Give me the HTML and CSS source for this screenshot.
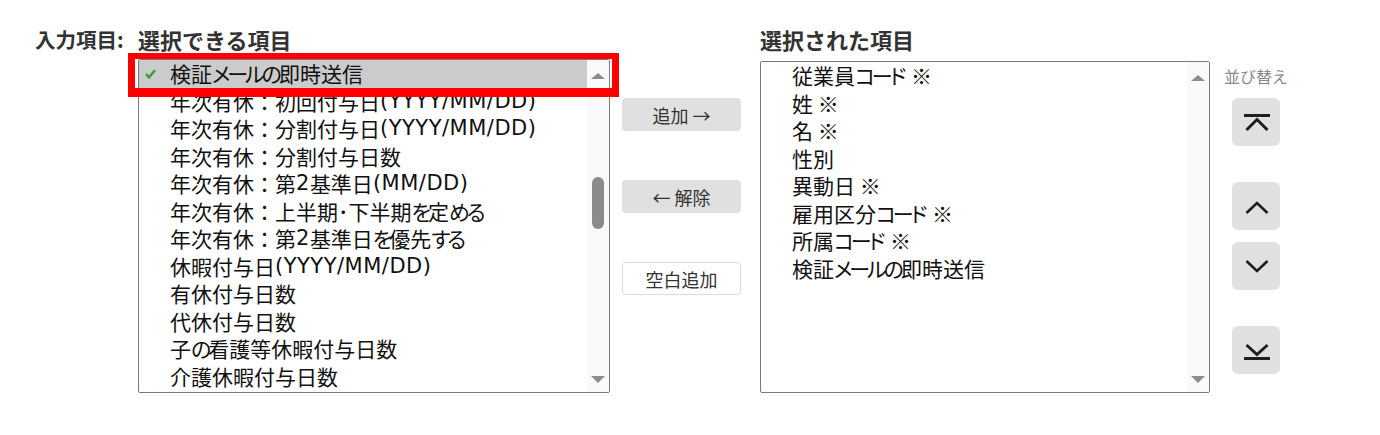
FILE: index.html
```html
<!DOCTYPE html>
<html lang="ja">
<head>
<meta charset="utf-8">
<title>入力項目</title>
<link rel="stylesheet" href="styles.css">
</head>
<body>
<div class="page">
  <div class="field-label">入力項目:</div>

  <div class="col col-left">
    <div class="heading">選択できる項目</div>
    <div class="listbox listbox-left">
      <ul class="items">
        <li class="item selected"><svg class="check" viewBox="0 0 11 10" width="11" height="10"><path d="M1 5.2 L4 8.3 L10 1.2" fill="none" stroke="#3a9b46" stroke-width="2.5"/></svg>検証<span class="kana">メールの</span>即時送信</li>
        <li class="item">年次有休<span class="fw">：</span>初回付与日<span class="lat">(YYYY/MM/DD)</span></li>
        <li class="item">年次有休<span class="fw">：</span>分割付与日<span class="lat">(YYYY/MM/DD)</span></li>
        <li class="item">年次有休<span class="fw">：</span>分割付与日数</li>
        <li class="item">年次有休<span class="fw">：</span>第<span class="lat">2</span>基準日<span class="lat">(MM/DD)</span></li>
        <li class="item">年次有休<span class="fw">：</span>上半期･下半期<span class="kana">を</span>定<span class="kana">める</span></li>
        <li class="item">年次有休<span class="fw">：</span>第<span class="lat">2</span>基準日<span class="kana">を</span>優先<span class="kana">する</span></li>
        <li class="item">休暇付与日<span class="lat">(YYYY/MM/DD)</span></li>
        <li class="item">有休付与日数</li>
        <li class="item">代休付与日数</li>
        <li class="item">子<span class="kana">の</span>看護等休暇付与日数</li>
        <li class="item">介護休暇付与日数</li>
      </ul>
      <div class="track">
        <span class="arrow up"></span>
        <span class="thumb"></span>
        <span class="arrow down"></span>
      </div>
    </div>
  </div>

  <div class="col-mid">
    <button class="btn btn-fill">追加 →</button>
    <button class="btn btn-fill">← 解除</button>
    <button class="btn btn-outline">空白追加</button>
  </div>

  <div class="col col-right">
    <div class="heading">選択された項目</div>
    <div class="listbox listbox-right">
      <ul class="items">
        <li class="item">従業員<span class="kana trail">コード</span> ※</li>
        <li class="item">姓 ※</li>
        <li class="item">名 ※</li>
        <li class="item">性別</li>
        <li class="item">異動日 ※</li>
        <li class="item">雇用区分<span class="kana trail">コード</span> ※</li>
        <li class="item">所属<span class="kana trail">コード</span> ※</li>
        <li class="item">検証<span class="kana">メールの</span>即時送信</li>
      </ul>
      <div class="track">
        <span class="arrow up"></span>
        <span class="arrow down"></span>
      </div>
    </div>
  </div>

  <div class="col-sort">
    <div class="sort-label">並び替え</div>
    <button class="sort-btn sort-top" aria-label="先頭へ"><svg viewBox="0 0 48 48" width="48" height="48"><path d="M12 17.5 H38" stroke="#1e1e1e" stroke-width="3" fill="none"/><path d="M14.5 32 L25 21.5 L35.5 32" stroke="#1e1e1e" stroke-width="3" fill="none"/></svg></button>
    <button class="sort-btn sort-up" aria-label="上へ"><svg viewBox="0 0 48 48" width="48" height="48"><path d="M14.5 31 L25 21 L35.5 31" stroke="#1e1e1e" stroke-width="2.6" fill="none"/></svg></button>
    <button class="sort-btn sort-down" aria-label="下へ"><svg viewBox="0 0 48 48" width="48" height="48"><path d="M14.5 19 L25 29 L35.5 19" stroke="#1e1e1e" stroke-width="2.6" fill="none"/></svg></button>
    <button class="sort-btn sort-bottom" aria-label="末尾へ"><svg viewBox="0 0 48 48" width="48" height="48"><path d="M14.5 19 L25 28.5 L35.5 19" stroke="#1e1e1e" stroke-width="3" fill="none"/><path d="M12 32.5 H38" stroke="#1e1e1e" stroke-width="3" fill="none"/></svg></button>
  </div>

  <div class="highlight"></div>
</div>
</body>
</html>
```

FILE: styles.css
```css
* {
  box-sizing: border-box;
}

html, body {
  margin: 0;
  padding: 0;
  background: #ffffff;
}

body {
  font-family: "Noto Sans CJK JP", "Noto Sans", sans-serif;
  color: #111;
}

.page {
  position: relative;
  display: flex;
  align-items: flex-start;
  padding: 25px 0 0 33px;
  height: 435px;
}

.field-label {
  width: 105px;
  padding-left: 2px;
  font-size: 20.5px;
  font-weight: bold;
  line-height: 28px;
  color: #333;
}

.heading {
  font-size: 22px;
  font-weight: bold;
  line-height: 28px;
  color: #333;
}

.col-left {
  width: 472px;
}

.col-right {
  width: 450px;
  margin-left: 19px;
}

.listbox {
  display: flex;
  border: 1px solid #7a7a7a;
  border-radius: 2px;
  background: #fff;
}

.listbox-left {
  margin-top: 6px;
  height: 334px;
}

.listbox-right {
  margin-top: 8px;
  height: 332px;
}

.items {
  flex: 1;
  list-style: none;
  margin: 0;
  padding: 0;
}

.item {
  display: flex;
  align-items: center;
  height: 27.5px;
  padding-left: 31px;
  font-size: 21px;
  line-height: 27.5px;
  white-space: pre;
  color: #111;
  font-feature-settings: "palt";
}

.item .fw {
  font-feature-settings: normal;
}

.item .kana {
  letter-spacing: -3px;
}

.item .kana.trail {
  margin-right: 3px;
}

.item .lat {
  font-family: "DejaVu Sans", "Noto Sans CJK JP", sans-serif;
  font-size: 21px;
  letter-spacing: 0.5px;
}

.item.selected {
  background: #cbcbcb;
}

.check {
  margin-left: -25px;
  margin-right: 14px;
  flex: none;
}

.track {
  width: 22px;
  flex: none;
  background: #f9f9f9;
  display: flex;
  flex-direction: column;
  align-items: center;
  padding: 13px 0 9px;
}

.arrow {
  width: 0;
  height: 0;
  border-left: 7.5px solid transparent;
  border-right: 7.5px solid transparent;
}

.arrow.up {
  border-bottom: 6px solid #8c8c8c;
}

.arrow.down {
  margin-top: auto;
  border-top: 7px solid #8c8c8c;
}

.thumb {
  margin-top: 98px;
  width: 12px;
  height: 52px;
  border-radius: 6px;
  background: #8a8a8a;
}

.col-mid {
  display: flex;
  flex-direction: column;
  gap: 49px;
  width: 119px;
  margin-left: 12px;
  padding-top: 73px;
}

.btn {
  height: 33px;
  border-radius: 4px;
  font-family: "Noto Sans CJK JP", "Noto Sans", sans-serif;
  font-size: 18px;
  line-height: 1;
  color: #333;
  padding: 0;
  cursor: pointer;
}

.btn-fill {
  background: #e0e0e0;
  border: none;
}

.btn-outline {
  background: #fff;
  border: 1px solid #dcdcdc;
}

.col-sort {
  display: flex;
  flex-direction: column;
  align-items: center;
  width: 64px;
  margin-left: 14px;
}

.sort-label {
  margin-top: 41px;
  font-size: 16px;
  line-height: 20px;
  color: #888;
  white-space: nowrap;
}

.sort-btn {
  width: 48px;
  height: 48px;
  padding: 0;
  border: none;
  border-radius: 6px;
  background: #e0e0e0;
  display: block;
}

.sort-btn svg {
  display: block;
}

.sort-top {
  margin-top: 12px;
}

.sort-up {
  margin-top: 36px;
}

.sort-down {
  margin-top: 12px;
}

.sort-bottom {
  margin-top: 36px;
}

.highlight {
  position: absolute;
  left: 128px;
  top: 53px;
  width: 491px;
  height: 44px;
  border-style: solid;
  border-color: #f00;
  border-width: 6px 7px 9px 7px;
  pointer-events: none;
}
```
